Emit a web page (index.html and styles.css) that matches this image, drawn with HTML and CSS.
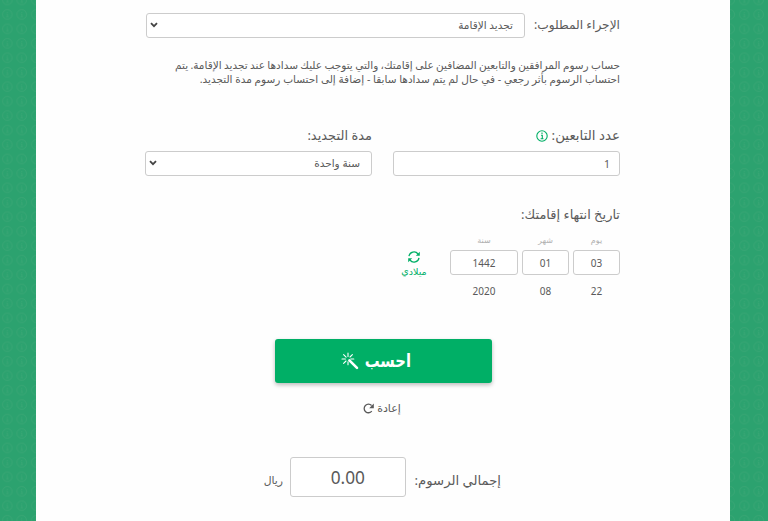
FILE: index.html
```html
<!DOCTYPE html>
<html lang="ar" dir="rtl">
<head>
<meta charset="utf-8">
<title>حساب الرسوم</title>
<link rel="stylesheet" href="styles.css">
</head>
<body>
<svg class="pattern" aria-hidden="true">
  <defs><pattern id="rings" width="14.45" height="14.45" patternUnits="userSpaceOnUse" y="-7.2">
    <circle cx="7.3" cy="7.2" r="4.8"/><path d="M7.3 4.8v1M6.6 7h.9v2.4M6.3 9.5h2.2"/>
  </pattern></defs>
  <rect width="768" height="521" fill="url(#rings)"/>
</svg>
<main class="page">
  <form class="form">
    <div class="procedure">
      <label class="label">الإجراء المطلوب:</label>
      <div class="field select procedure-select">تجديد الإقامة
        <svg class="chevron" viewBox="0 0 8 6"><path d="M1 1.2 4 4.2 7 1.2"/></svg></div>
    </div>
    <div class="note"><span class="line first">حساب رسوم المرافقين والتابعين المضافين على إقامتك، والتي يتوجب عليك سدادها عند تجديد الإقامة. يتم</span><span class="line">احتساب الرسوم بأثر رجعي - في حال لم يتم سدادها سابقا - إضافة إلى احتساب رسوم مدة التجديد.</span></div>
    <div class="columns">
      <div>
        <label class="label dependents">عدد التابعين:
          <svg class="info" viewBox="0 0 12 12"><circle cx="6" cy="6" r="5.2"/><path d="M6 2.6v1.5M5 5.2h1.3v3.3M4.6 8.8h2.9"/></svg></label>
        <div class="field number">1</div>
      </div>
      <div>
        <label class="label">مدة التجديد:</label>
        <div class="field select">سنة واحدة
          <svg class="chevron" viewBox="0 0 8 6"><path d="M1 1.2 4 4.2 7 1.2"/></svg></div>
      </div>
    </div>
    <div class="label date-label">تاريخ انتهاء إقامتك:</div>
    <div class="date">
      <div class="part"><small>يوم</small><div class="field">03</div><span>22</span></div>
      <div class="part"><small>شهر</small><div class="field">01</div><span>08</span></div>
      <div class="part year"><small>سنة</small><div class="field">1442</div><span>2020</span></div>
      <div class="switch">
        <svg viewBox="0 0 12 12"><path class="arc" d="M1 5.2A5 5 0 0 1 10 3M11 6.8A5 5 0 0 1 2 9"/><path class="tip" d="M11.8.8v4H7.8zM.2 11.2v-4h4z"/></svg>
        <span>ميلادي</span>
      </div>
    </div>
    <div class="actions">
      <div class="calculate"><span>احسب</span>
        <svg viewBox="0 0 18 18"><path class="wand" d="m8.4 8.4 7.6 7.5"/><path class="rays" d="M7 1v3.4M1 7h3.4M2.6 2.6l2.5 2.5M11.4 2.6 9 5M2.6 11.4 5 9M7 9.8v3M9.8 7h3"/></svg></div>
      <div class="reset"><span>إعادة</span>
        <svg viewBox="0 0 11 11"><path class="arc" d="M8.8 8.2A4.3 4.3 0 1 1 8.6 2.5"/><path class="tip" d="M10.8.6v4.6H6.2z"/></svg></div>
    </div>
    <div class="total">
      <label class="label">إجمالي الرسوم:</label>
      <div class="field amount"><span>0.00</span></div>
      <span class="currency">ريال</span>
    </div>
  </form>
</main>
</body>
</html>
```
FILE: styles.css
```css
* { box-sizing: border-box; }
body {
  margin: 0;
  height: 521px;
  overflow: hidden;
  background: #2ca26f;
  color: #5a5a5a;
  font: 10.5px/14px "Noto Sans", "DejaVu Sans", sans-serif;
}
.pattern { position: absolute; inset: 0; width: 768px; height: 521px; }
.pattern circle, .pattern path { fill: none; stroke: #42a878; stroke-width: .7; opacity: .75; }
.page {
  position: relative;
  width: 694px;
  height: 521px;
  margin-right: 38px;
  background: #fefefe;
}
.form { width: 475px; margin-right: 110px; padding-top: 13px; }
.label { display: block; font-size: 13px; line-height: 20px; color: #5a5a5a; white-space: nowrap; }
.field {
  display: flex;
  align-items: center;
  height: 25px;
  padding: 0 9px;
  border: 1px solid #ccc;
  border-radius: 3px;
  background: #fff;
  white-space: nowrap;
}
.select { justify-content: space-between; padding: 0 11px 2px 3px; }
.chevron { width: 8px; height: 6px; fill: none; stroke: #444; stroke-width: 1.8; }
.procedure { display: flex; justify-content: space-between; height: 25px; margin-left: 1px; }
.procedure .label { width: 86px; font-size: 12.2px; line-height: 23px; }
.procedure-select { width: 379px; }
.note { margin-top: 20px; height: 30px; white-space: nowrap; }
.line { display: block; height: 14px; }
.line.first { word-spacing: -.36px; }
.columns { display: grid; grid-template-columns: 227px 227px; gap: 21px; margin-top: 37px; }
.columns .label { height: 26px; }
.columns .dependents { font-size: 13.4px; }
.number { font-size: 10.5px; }
.info { width: 12px; height: 12px; vertical-align: -2px; fill: none; stroke: #00af66; stroke-width: 1.1; }
.date-label { margin-top: 28px; }
.date { display: flex; gap: 4px; margin-top: 9px; }
.part { width: 47px; font-size: 10px; text-align: center; }
.year { width: 68px; }
.part small { display: block; height: 17px; font-size: 8px; line-height: 14px; color: #b0b0b0; }
.part .field { justify-content: center; padding: 0; }
.part > span { display: block; margin-top: 9px; }
.switch { width: 30px; margin-right: 17px; padding-top: 18px; color: #00af66; font-size: 9.6px; text-align: center; }
.switch svg { display: block; width: 12px; height: 12px; margin: 0 auto 2px; }
.arc { fill: none; stroke: currentColor; stroke-width: 1.3; }
.tip { fill: currentColor; }
.actions { display: flex; flex-direction: column; align-items: center; margin: 41px 0 0 1px; }
.calculate {
  display: flex;
  align-items: center;
  justify-content: center;
  gap: 6px;
  width: 217px;
  height: 44px;
  padding-right: 0;
  padding-left: 0;
  border-radius: 3px;
  background: #00af66;
  box-shadow: 0 2px 4px #0004;
  color: #fff;
  font: bold 18px/24px "DejaVu Sans", sans-serif;
}
.calculate { justify-content: flex-start; padding-right: 81px; }
.calculate span { width: 46px; white-space: nowrap; transform: scaleX(.82); transform-origin: right; }
.calculate svg { flex: none; width: 18px; height: 18px; fill: none; stroke: #fff; stroke-linecap: round; }
.wand { stroke-width: 2.6; }
.rays { stroke-width: 1.1; }
.reset { display: flex; align-items: center; gap: 3px; margin: 18px 0 0 2px; font-size: 11px; }
.reset { margin-left: 0; margin-right: 2px; }
.reset svg { width: 11px; height: 11px; }
.total { display: flex; align-items: center; margin: 42px 119px 0 0; }
.total .label { width: 95px; padding-top: 5px; font-size: 13.2px; }
.amount { justify-content: center; width: 116px; height: 40px; font-size: 18px; }
.amount span { transform: scaleX(.96); }
.currency { margin-right: 7px; padding-top: 5px; font-size: 10.8px; }
```
